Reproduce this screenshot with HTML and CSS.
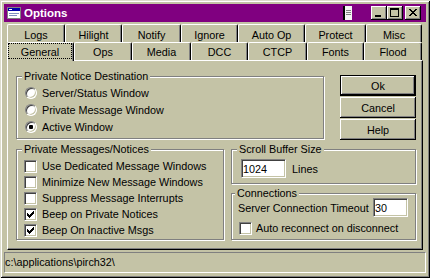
FILE: index.html
```html
<!DOCTYPE html>
<html lang="en">
 <head>
  <meta charset="UTF-8">
  <title>Options</title>
  <link rel="stylesheet" href="styles.css">
 </head>
 <body>
 <div class="window">
	<div class="titlebar">
		<svg class="app-icon" width="16" height="16" viewBox="0 0 16 16" shape-rendering="crispEdges">
			<rect x="1" y="2" width="14" height="12" fill="#808080"/>
			<rect x="2" y="3" width="12" height="10" fill="#ffffff"/>
			<rect x="2" y="3" width="12" height="3" fill="#0000a8"/>
			<rect x="3" y="4" width="3" height="1" fill="#ffffff"/>
			<rect x="3" y="8" width="10" height="1" fill="#8090c0"/>
			<rect x="3" y="10" width="8" height="1" fill="#8090c0"/>
		</svg>
		<span class="title">Options</span>
		<svg class="grip" width="9" height="14" viewBox="0 0 9 14" shape-rendering="crispEdges">
			<rect x="0" y="0" width="2" height="14" fill="#000000"/>
			<rect x="2" y="0" width="7" height="14" fill="#f4f4f4"/>
			<rect x="3" y="4" width="5" height="1" fill="#808080"/>
			<rect x="3" y="6" width="5" height="1" fill="#808080"/>
			<rect x="3" y="8" width="5" height="1" fill="#808080"/>
		</svg>
		<span class="tbtn">
			<svg width="16" height="14" viewBox="0 0 16 14" shape-rendering="crispEdges"><path d="M4 9h6v2H4z"/></svg>
		</span>
		<span class="tbtn">
			<svg width="16" height="14" viewBox="0 0 16 14" shape-rendering="crispEdges"><path fill-rule="evenodd" d="M3 2h9v9H3z M4 4h7v6H4z"/></svg>
		</span>
		<span class="tbtn close">
			<svg width="16" height="14" viewBox="0 0 16 14" shape-rendering="crispEdges"><path d="M4 3h2v1H4z M10 3h2v1h-2z M5 4h2v1H5z M9 4h2v1H9z M6 5h4v1H6z M7 6h2v1H7z M6 7h4v1H6z M5 8h2v1H5z M9 8h2v1H9z M4 9h2v1H4z M10 9h2v1h-2z"/></svg>
		</span>
	</div>

	<div class="tabs back">
		<div class="tab">Logs</div>
		<div class="tab">Hilight</div>
		<div class="tab">Notify</div>
		<div class="tab">Ignore</div>
		<div class="tab">Auto Op</div>
		<div class="tab">Protect</div>
		<div class="tab">Misc</div>
	</div>
	<div class="tabs front">
		<div class="tab active"><span class="focus">General</span></div>
		<div class="tab">Ops</div>
		<div class="tab">Media</div>
		<div class="tab">DCC</div>
		<div class="tab">CTCP</div>
		<div class="tab">Fonts</div>
		<div class="tab">Flood</div>
	</div>

	<div class="panel">
		<div class="row">
			<fieldset class="group notice">
				<legend>Private Notice Destination</legend>
				<div class="items">
					<label class="opt"><span class="radio"></span>Server/Status Window</label>
					<label class="opt"><span class="radio"></span>Private Message Window</label>
					<label class="opt"><span class="radio on"></span>Active Window</label>
				</div>
			</fieldset>
			<div class="buttons">
				<button class="btn default">Ok</button>
				<button class="btn">Cancel</button>
				<button class="btn">Help</button>
			</div>
		</div>

		<div class="row lower">
			<fieldset class="group messages">
				<legend>Private Messages/Notices</legend>
				<div class="items">
					<label class="chk"><span class="box"></span>Use Dedicated Message Windows</label>
					<label class="chk"><span class="box"></span>Minimize New Message Windows</label>
					<label class="chk"><span class="box"></span>Suppress Message Interrupts</label>
					<label class="chk"><span class="box"><svg width="7" height="7" viewBox="0 0 7 7" shape-rendering="crispEdges"><path d="M6 0h1v1H6z M5 1h2v1H5z M0 2h1v1H0z M4 2h3v1H4z M0 3h2v1H0z M3 3h3v1H3z M0 4h5v1H0z M1 5h3v1H1z M2 6h1v1H2z"/></svg></span>Beep on Private Notices</label>
					<label class="chk"><span class="box"><svg width="7" height="7" viewBox="0 0 7 7" shape-rendering="crispEdges"><path d="M6 0h1v1H6z M5 1h2v1H5z M0 2h1v1H0z M4 2h3v1H4z M0 3h2v1H0z M3 3h3v1H3z M0 4h5v1H0z M1 5h3v1H1z M2 6h1v1H2z"/></svg></span>Beep On Inactive Msgs</label>
				</div>
			</fieldset>

			<div class="side">
				<fieldset class="group scroll">
					<legend>Scroll Buffer Size</legend>
					<div class="items line">
						<input type="text" class="field lines-field" value="1024">
						<span class="unit">Lines</span>
					</div>
				</fieldset>
				<fieldset class="group conn">
					<legend>Connections</legend>
					<div class="items">
						<div class="line timeout">
							<span>Server Connection Timeout</span>
							<input type="text" class="field timeout-field" value="30">
						</div>
						<label class="chk reconnect"><span class="box"></span>Auto reconnect on disconnect</label>
					</div>
				</fieldset>
			</div>
		</div>
	</div>

	<div class="status">c:\applications\pirch32\</div>
 </div>
 </body>
</html>
```

FILE: styles.css
```css
	body{
		margin:0;
		padding:0;
		background:#c4c3a6;
		font-family:"Liberation Sans", Arial, sans-serif;
		font-size:10.8px;
		color:#000000;
	}

	/* window frame */
	.window{
		width:430px;
		height:278px;
		box-sizing:border-box;
		padding:4px;
		display:flex;
		flex-direction:column;
		background:#c4c3a6;
		box-shadow:inset 1px 1px #dcdccc, inset -1px -1px #000000, inset 2px 2px #ffffff, inset -2px -2px #808080;
	}
	.titlebar{
		height:18px;
		display:flex;
		align-items:center;
		padding:0 5px 0 2px;
		background:#800080;
		color:#FFFFFF;
	}
	.app-icon{
		margin-right:2px;
	}
	.title{
		flex:1;
		font-weight:bold;
		font-size:11.5px;
	}
	.grip{
		margin-right:19px;
	}
	.tbtn{
		width:16px;
		height:14px;
		background:#c4c3a6;
		box-shadow:inset -1px -1px #000000, inset 1px 1px #ffffff, inset -2px -2px #808080;
	}
	.tbtn svg{
		display:block;
	}
	.tbtn.close{
		margin-left:2px;
	}

	/* tabs */
	.tabs{
		display:grid;
		height:18px;
		margin:0 4px 0 3px;
	}
	.back{
		margin-top:2px;
		grid-template-columns:58px 57px 59px 57px 67px 61px 56px;
	}
	.front{
		grid-template-columns:67px 58px 59px 57px 59px 57px 58px;
	}
	.tab{
		box-sizing:border-box;
		border-top:1px solid #ffffff;
		border-left:1px solid #ffffff;
		border-right:1px solid #000000;
		border-radius:2px 2px 0 0;
		box-shadow:inset -1px 0 #808080;
		text-align:center;
		line-height:13px;
		padding-top:3px;
		background:#c4c3a6;
	}
	.back .tab{
		padding-top:4px;
	}
	.tab.active{
		position:relative;
		height:19px;
		margin-bottom:-1px;
		padding:0 1px 2px 0;
	}
	.focus{
		display:block;
		height:100%;
		box-sizing:border-box;
		border:1px dotted #000000;
		line-height:13px;
		padding-top:2px;
	}

	/* page body */
	.panel{
		height:190px;
		box-sizing:border-box;
		margin:0 3px;
		padding:9px 0 0 8px;
		border:1px solid;
		border-color:#ffffff #000000 #000000 #ffffff;
		box-shadow:inset -1px -1px #808080;
	}
	.row{
		display:flex;
		align-items:flex-start;
	}
	.lower{
		margin-top:3px;
	}
	.group{
		margin:0;
		padding:0;
		min-width:0;
		box-sizing:border-box;
		border:1px solid #808080;
		box-shadow:inset 1px 1px #ffffff, 1px 1px #ffffff;
	}
	.group legend{
		margin-left:5px;
		padding:0 2px;
		line-height:13px;
		background:#c4c3a6;
	}
	.notice{
		width:308px;
	}
	.notice .items{
		padding:1px 0 3px 8px;
	}
	.messages{
		width:208px;
	}
	.messages .items{
		padding:2px 0 1px 7px;
	}
	.side{
		width:185px;
		margin-left:7px;
	}
	.scroll .items{
		padding:3px 0 5px 9px;
	}
	.conn{
		margin-top:3px;
	}
	.conn legend{
		margin-left:3px;
	}
	.conn .items{
		padding:0 7px 3px 6px;
	}

	.opt, .chk{
		display:flex;
		align-items:center;
	}
	.opt{
		height:17px;
	}
	.chk{
		height:16px;
	}
	.radio{
		width:12px;
		height:12px;
		box-sizing:border-box;
		margin-right:5px;
		border-radius:50%;
		border:1px solid;
		border-color:#808080 #ffffff #ffffff #808080;
		background:#ffffff;
		box-shadow:inset 1px 1px #404040, inset -1px -1px #c4c3a6;
		display:flex;
		align-items:center;
		justify-content:center;
	}
	.radio.on::after{
		content:"";
		width:4px;
		height:4px;
		border-radius:1px;
		background:#000000;
	}
	.box{
		width:13px;
		height:13px;
		box-sizing:border-box;
		margin-right:5px;
		border:1px solid;
		border-color:#808080 #ffffff #ffffff #808080;
		background:#ffffff;
		box-shadow:inset 1px 1px #404040, inset -1px -1px #c4c3a6;
		display:flex;
		align-items:center;
		justify-content:center;
	}
	.box svg{
		display:block;
	}

	.line{
		display:flex;
		align-items:center;
	}
	.field{
		height:19px;
		box-sizing:border-box;
		margin:0;
		padding:0 1px;
		font:inherit;
		color:#000000;
		background:#ffffff;
		border:1px solid;
		border-color:#808080 #ffffff #ffffff #808080;
		box-shadow:inset 1px 1px #404040, inset -1px -1px #c4c3a6;
		outline:none;
	}
	.lines-field{
		width:45px;
	}
	.unit{
		margin-left:6px;
	}
	.timeout{
		margin-top:-2px;
	}
	.timeout-field{
		width:35px;
		margin-left:auto;
	}
	.reconnect{
		margin-top:3px;
		padding-left:1px;
	}
	.reconnect .box{
		margin-right:4px;
	}

	/* buttons */
	.buttons{
		width:76px;
		margin:5px 0 0 16px;
		display:flex;
		flex-direction:column;
		gap:1px;
	}
	.btn{
		height:21px;
		box-sizing:border-box;
		margin:0;
		padding:0;
		font:inherit;
		color:#000000;
		background:#c4c3a6;
		border:0;
		box-shadow:inset -1px -1px #000000, inset 1px 1px #ffffff, inset -2px -2px #808080;
	}
	.btn.default{
		border:1px solid #000000;
	}

	/* status line */
	.status{
		height:21px;
		box-sizing:border-box;
		margin-top:2px;
		border:1px solid;
		border-color:#808080 #ffffff #ffffff #808080;
		line-height:19px;
		white-space:nowrap;
	}
```
